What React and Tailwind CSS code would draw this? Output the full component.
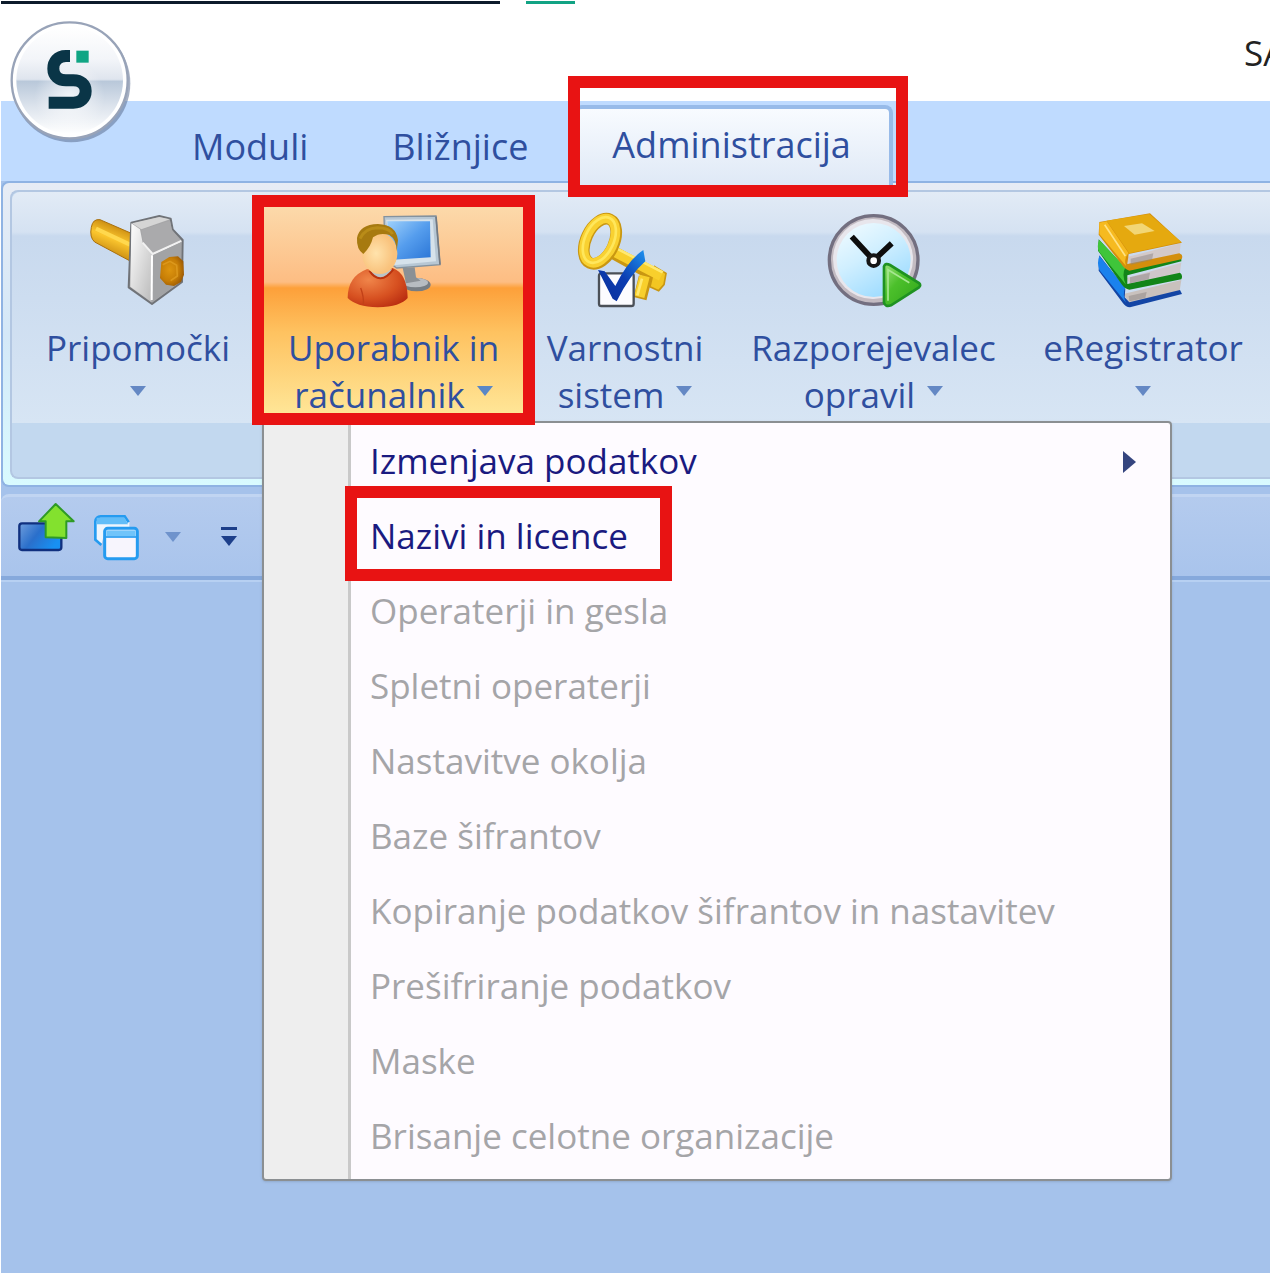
import React, { useState } from "react";

const menuItems = [
  { label: "Izmenjava podatkov", enabled: true, submenu: true },
  { label: "Nazivi in licence", enabled: true, marked: true },
  { label: "Operaterji in gesla" },
  { label: "Spletni operaterji" },
  { label: "Nastavitve okolja" },
  { label: "Baze šifrantov" },
  { label: "Kopiranje podatkov šifrantov in nastavitev" },
  { label: "Prešifriranje podatkov" },
  { label: "Maske" },
  { label: "Brisanje celotne organizacije" },
];

const tabs = ["Moduli", "Bližnjice", "Administracija"];

function Logo() {
  return (
    <svg viewBox="24 60 372 372" className="size-[124px]" aria-hidden="true">
      <defs>
        <linearGradient id="orbTop" x1="0" y1="0" x2="0" y2="1">
          <stop offset="0" stopColor="#ffffff" />
          <stop offset="0.3" stopColor="#f3f5f9" />
          <stop offset="0.49" stopColor="#dfe5ee" />
          <stop offset="0.51" stopColor="#b9c8da" />
          <stop offset="0.75" stopColor="#dde4ed" />
          <stop offset="1" stopColor="#ffffff" />
        </linearGradient>
        <radialGradient id="orbGlow">
          <stop offset="0" stopColor="#ffffff" stopOpacity="0.75" />
          <stop offset="1" stopColor="#ffffff" stopOpacity="0" />
        </radialGradient>
      </defs>
      <circle cx="214" cy="250" r="177" fill="#5c6f92" opacity="0.55" />
      <circle cx="209" cy="241" r="174" fill="#ffffff" stroke="#98a3b8" strokeWidth="7" />
      <circle cx="209" cy="241" r="160" fill="url(#orbTop)" />
      <ellipse cx="209" cy="290" rx="105" ry="110" fill="url(#orbGlow)" />
      <path d="M210 168 h-12 c-26 0 -38 18 -38 38 c0 22 16 35 38 35 h22 c22 0 37 12 37 32 c0 21 -14 35 -37 35 h-74" fill="none" stroke="#0a3547" strokeWidth="36" />
      <rect x="229" y="152" width="37" height="36" fill="#10a584" />
    </svg>
  );
}

function HammerIcon() {
  return (
    <svg viewBox="272 96 288 288" className="size-24" aria-hidden="true">
      <defs>
        <linearGradient id="handle" x1="0.3" y1="0" x2="0" y2="0.8">
          <stop offset="0" stopColor="#c98a10" />
          <stop offset="0.4" stopColor="#fbc62e" />
          <stop offset="1" stopColor="#b87708" />
        </linearGradient>
        <linearGradient id="steel" x1="0" y1="0" x2="1" y2="1">
          <stop offset="0" stopColor="#ffffff" />
          <stop offset="1" stopColor="#b9b9b9" />
        </linearGradient>
        <radialGradient id="knob" cx="0.4" cy="0.45" r="0.65">
          <stop offset="0" stopColor="#dd950f" />
          <stop offset="0.6" stopColor="#c67d06" />
          <stop offset="1" stopColor="#965504" />
        </radialGradient>
      </defs>
      <path d="M276 142 Q280 116 302 119 L396 160 L398 246 L286 186 Q270 172 276 142Z" fill="url(#handle)" stroke="#a8700e" strokeWidth="3" />
      <path d="M290 146 L392 194" stroke="#ffd84e" strokeWidth="12" />
      <path d="M396 128 L480 108 L514 116 L520 148 L550 180 L548 306 L458 372 L388 322Z" fill="#a6a6a8" stroke="#707378" strokeWidth="6" strokeLinejoin="round" />
      <path d="M396 130 L422 148 L430 188 L460 226 L456 366 L393 320Z" fill="url(#steel)" />
      <path d="M398 130 L480 111 L512 118 L426 148Z" fill="#d5d5d5" />
      <path d="M426 150 L512 122 L518 150 L544 182 L460 222 L432 186Z" fill="#aaaaac" />
      <path d="M430 188 L460 222 L546 183" fill="none" stroke="#f2f2f2" strokeWidth="6" />
      <path d="M462 226 L546 186 L545 304 L460 364Z" fill="#a2a3a5" />
      <path d="M458 226 L457 360" stroke="#ffffff" strokeWidth="6" />
      <path d="M486 246 L510 231 L536 229 L552 244 L554 284 L545 306 L524 318 L500 314 L482 294Z" fill="url(#knob)" />
      <path d="M490 254 L512 244 L532 256 L534 288 L514 302" fill="none" stroke="#e3a024" strokeWidth="5" opacity="0.7" />
    </svg>
  );
}

function UserComputerIcon() {
  return (
    <svg viewBox="310 66 288 288" className="size-24" aria-hidden="true">
      <defs>
        <linearGradient id="screen" x1="0" y1="0" x2="1" y2="1">
          <stop offset="0" stopColor="#9ed0fb" />
          <stop offset="0.5" stopColor="#559ded" />
          <stop offset="1" stopColor="#2a75d6" />
        </linearGradient>
        <radialGradient id="face" cx="0.4" cy="0.5">
          <stop offset="0" stopColor="#ffe3ac" />
          <stop offset="1" stopColor="#f9c27c" />
        </radialGradient>
        <radialGradient id="shirt" cx="0.35" cy="0.3" r="0.8">
          <stop offset="0" stopColor="#f0854a" />
          <stop offset="0.6" stopColor="#d75121" />
          <stop offset="1" stopColor="#b92c10" />
        </radialGradient>
      </defs>
      <ellipse cx="522" cy="284" rx="42" ry="20" fill="#777d83" />
      <ellipse cx="518" cy="278" rx="38" ry="14" fill="#b7bcc1" />
      <path d="M480 234 L516 232 L520 262 L534 272 L490 280Z" fill="#8b9095" />
      <path d="M424 80 L580 78 L592 224 L462 234 L428 210Z" fill="#b7c7d4" stroke="#84929e" strokeWidth="4" />
      <path d="M430 89 L570 88 L580 214 L452 226Z" fill="#d6e2eb" />
      <path d="M434 94 L562 94 L564 202 L440 210Z" fill="url(#screen)" />
      <path d="M580 80 L592 224" stroke="#737a83" strokeWidth="5" />
      <path d="M315 324 Q315 260 372 238 L450 234 Q494 250 495 324 Q474 350 405 352 Q340 350 315 324Z" fill="url(#shirt)" />
      <path d="M380 242 Q412 290 452 238" fill="#b9c3c6" stroke="#b9320e" strokeWidth="6" />
      <ellipse cx="411" cy="190" rx="53" ry="62" fill="url(#face)" />
      <path d="M362 192 Q341 178 343 144 Q350 104 406 102 Q460 104 466 150 L462 184 Q462 148 440 135 Q412 126 391 142 Q384 172 362 192Z" fill="#a77a10" />
      <path d="M352 146 Q366 114 404 113 Q440 113 450 132" fill="none" stroke="#b98c18" strokeWidth="9" />
      <path d="M354 294 Q364 320 362 344" fill="none" stroke="#c24118" strokeWidth="4" />
    </svg>
  );
}

function KeyIcon() {
  return (
    <svg viewBox="111 66 288 288" className="size-24" aria-hidden="true">
      <defs>
        <linearGradient id="tick" x1="0" y1="1" x2="1" y2="0">
          <stop offset="0" stopColor="#0b2f9a" />
          <stop offset="0.5" stopColor="#0b3db2" />
          <stop offset="1" stopColor="#1f93ef" />
        </linearGradient>
      </defs>
      <path d="M206 180 L362 266 M316 262 L300 326" fill="none" stroke="#c99712" strokeWidth="40" />
      <path d="M344 230 L378 250 L372 284 L356 302 L330 290Z" fill="#f3c622" stroke="#c99712" strokeWidth="5" />
      <path d="M206 176 L364 258 M314 258 L298 320" fill="none" stroke="#f8cf2c" strokeWidth="31" />
      <path d="M212 166 L368 247 M306 266 L292 316" fill="none" stroke="#ffe970" strokeWidth="8" />
      <ellipse cx="180" cy="154" rx="42" ry="72" transform="rotate(25 180 154)" fill="none" stroke="#c99712" strokeWidth="35" />
      <ellipse cx="179" cy="152" rx="41" ry="71" transform="rotate(25 179 152)" fill="none" stroke="#f9d131" strokeWidth="28" />
      <ellipse cx="178" cy="150" rx="43" ry="73" transform="rotate(25 178 150)" fill="none" stroke="#ffe75c" strokeWidth="8" />
      <rect x="177" y="250" width="104" height="98" rx="7" fill="#fcfcff" stroke="#4b5057" strokeWidth="7" />
      <path d="M174 240 L194 244 L226 288 Q264 210 310 180 L316 214 Q270 254 230 334 L218 326Z" fill="url(#tick)" />
    </svg>
  );
}

function ClockIcon() {
  return (
    <svg viewBox="255 66 288 288" className="size-24" aria-hidden="true">
      <defs>
        <linearGradient id="dial" x1="0" y1="0" x2="0.6" y2="1">
          <stop offset="0" stopColor="#f4fcff" />
          <stop offset="0.5" stopColor="#d0efff" />
          <stop offset="1" stopColor="#9fdcff" />
        </linearGradient>
        <linearGradient id="play" x1="0" y1="0" x2="1" y2="1">
          <stop offset="0" stopColor="#9ae27a" />
          <stop offset="0.4" stopColor="#4cc02b" />
          <stop offset="1" stopColor="#2fa51a" />
        </linearGradient>
      </defs>
      <circle cx="398" cy="210" r="133" fill="#c3bbc2" stroke="#736f80" strokeWidth="10" />
      <circle cx="396" cy="207" r="120" fill="#e8e6ec" />
      <circle cx="398" cy="210" r="111" fill="url(#dial)" />
      <path d="M338 146 L398 211 L446 166" fill="none" stroke="#0d0d0d" strokeWidth="17" strokeLinecap="square" />
      <circle cx="398" cy="212" r="16" fill="#ffffff" stroke="#161616" strokeWidth="12" />
      <path d="M429 229 Q433 218 447 225 L534 279 Q541 286 534 292 L450 346 Q433 352 429 338Z" fill="url(#play)" stroke="#1f9222" strokeWidth="8" />
      <path d="M441 332 L441 239 L505 278" fill="none" stroke="#a6e791" strokeWidth="5" />
    </svg>
  );
}

function BooksIcon() {
  return (
    <svg viewBox="255 96 288 288" className="size-24" aria-hidden="true">
      <path d="M340 342 L514 300 L508 338 L360 372Z" fill="#c9c1bd" />
      <path d="M268 226 L346 326 L344 352 L358 367 L510 330 L516 342 L360 382 Q346 380 338 368 L266 272Z" fill="#1345a5" />
      <path d="M268 228 L346 322 Q336 344 348 368 L268 270 Q260 248 268 228Z" fill="#1b82ed" />
      <path d="M350 294 L514 248 L508 288 L360 314Z" fill="#cfc7ca" />
      <path d="M266 178 L346 264 L514 224 L514 244 L352 286 L352 312 L510 278 Q520 286 514 298 L358 329 Q344 326 336 314 L264 212Z" fill="#128518" />
      <path d="M268 180 L346 262 Q334 286 348 314 L266 214 Q260 196 268 180Z" fill="#3fc53a" />
      <path d="M348 232 L512 190 L508 228 L360 258Z" fill="#d3c9c8" />
      <path d="M268 126 L420 100 L516 188 L356 222 L352 252 L508 220 Q522 226 514 238 L358 272 Q342 266 334 252 L266 164Z" fill="#d48e0c" />
      <path d="M290 122 L418 102 L514 186 L358 220Z" fill="#e5a90f" />
      <path d="M268 128 L290 124 L356 220 Q340 234 348 258 L268 162Z" fill="#f6ba20" />
      <path d="M284 134 L346 228" stroke="#ffe285" strokeWidth="5" />
      <path d="M342 138 L396 130 L434 153 L374 164Z" fill="#f2d675" />
      <path d="M362 236 L430 220 L426 240 L362 254Z M360 292 L420 278 L416 298 L360 310Z M356 348 L410 336 L406 354 L358 364Z" fill="#8d8684" opacity="0.5" />
    </svg>
  );
}

function ExportIcon() {
  return (
    <svg viewBox="54 96 180 150" className="h-[50px] w-[60px]" aria-hidden="true">
      <defs>
        <linearGradient id="box" x1="0" y1="0" x2="1" y2="0.5">
          <stop offset="0" stopColor="#6f9ddc" />
          <stop offset="0.5" stopColor="#2a6fcb" />
          <stop offset="1" stopColor="#1890f2" />
        </linearGradient>
      </defs>
      <rect x="61" y="160" width="126" height="80" rx="8" fill="url(#box)" stroke="#10307f" strokeWidth="7" />
      <path d="M140 202 V154 H120 L170 102 L224 154 H202 V204Z" fill="#83e12e" stroke="#2e9a26" strokeWidth="6" strokeLinejoin="round" />
    </svg>
  );
}

function WindowsIcon() {
  return (
    <svg viewBox="279 132 144 144" className="size-12" aria-hidden="true">
      <path d="M286 158 Q288 142 302 142 L376 142 L388 160 L388 180 L316 180 L304 228 L286 212Z" fill="#eef5fd" />
      <path d="M304 228 L286 212 L286 158 Q288 142 302 142 L374 142 L386 160" fill="none" stroke="#259bf0" strokeWidth="8" />
      <path d="M290 146 H374 L384 166 H290Z" fill="#62bdf8" />
      <rect x="314" y="178" width="98" height="91" rx="9" fill="#f7f5fd" stroke="#259bf0" strokeWidth="9" />
      <rect x="319" y="184" width="88" height="18" fill="#70c4fa" />
      <path d="M318 204 H408" stroke="#259bf0" strokeWidth="5" />
    </svg>
  );
}

function Arrow({ className }) {
  return (
    <svg viewBox="0 0 16 10" className={className} fill="currentColor" aria-hidden="true">
      <path d="M0 0 H16 L8 10Z" />
    </svg>
  );
}

function RedFrame({ className }) {
  return <span className={"pointer-events-none absolute z-20 border-12 border-[#e81313] " + className} />;
}

function RibbonButton({ icon, lines, className, active, onClick }) {
  return (
    <button
      type="button"
      onClick={onClick}
      className={"flex h-full shrink-0 flex-col items-center pt-5 text-[35px] leading-[47px] " + className}
    >
      {icon}
      <span className="mt-4 block">{lines[0]}</span>
      <span className="flex h-[47px] items-center justify-center gap-3">
        {lines[1]}
        <Arrow className={"-mt-2 h-[10px] w-4 " + (active ? "text-[#5a87c6]" : "text-[#6488c4]")} />
      </span>
    </button>
  );
}

function DropdownMenu() {
  return (
    <ul className="absolute top-full -left-0.5 z-10 w-[910px] rounded-sm border-2 border-[#8b8f92] bg-[linear-gradient(90deg,#eeeeee_84px,#c9c9c9_84px,#c9c9c9_87px,#fefbff_87px)] pt-px pb-[5px] text-[35px] shadow-sm">
      {menuItems.map((item) => (
        <li key={item.label} className="relative">
          <button
            type="button"
            disabled={!item.enabled}
            className={
              "flex h-[75px] w-full items-center justify-between pr-[34px] pl-[106px] text-left whitespace-nowrap " +
              (item.enabled ? "text-[#1a1a80]" : "text-[#a5a5a8]")
            }
          >
            {item.label}
            {item.submenu && (
              <svg viewBox="0 0 13 22" className="h-[22px] w-[13px]" fill="#35457f" aria-hidden="true">
                <path d="M0 0 L13 11 L0 22Z" />
              </svg>
            )}
          </button>
          {item.marked && <RedFrame className="-top-[13px] left-[81px] h-[95px] w-[327px]" />}
        </li>
      ))}
    </ul>
  );
}

function App() {
  const [activeTab, setActiveTab] = useState("Administracija");
  const [menuOpen, setMenuOpen] = useState(true);

  return (
    <div className="flex min-h-screen flex-col overflow-hidden border-x border-b border-white bg-[#a5c2eb] font-['Open_Sans','Noto_Sans',sans-serif] text-[36px] text-[#2f4f9f]">
      {/* title bar */}
      <header className="relative flex h-[101px] flex-col bg-white pt-px">
        <div className="flex h-[3px] gap-[26px]">
          <div className="w-[499px] bg-[#0d1b2b]" />
          <div className="w-[49px] bg-[#12a384]" />
        </div>
        <h1 className="mt-[25px] ml-auto w-[26px] overflow-hidden text-[35px] leading-[48px] text-[#222222]">SA</h1>
        <button type="button" aria-label="Meni" className="absolute top-5 left-[7px] z-10 rounded-full">
          <Logo />
        </button>
      </header>

      {/* tabs */}
      <nav className="flex h-20 items-end gap-2 bg-[#bfdbff] pl-[153px]">
        {tabs.map((tab) => (
          <button
            key={tab}
            type="button"
            onClick={() => setActiveTab(tab)}
            className={
              "relative px-[38px] " +
              (activeTab === tab
                ? "z-10 -mb-1 h-20 rounded-t-lg border-t-4 border-r-4 border-[#98bbe9] bg-linear-to-b from-[#f8fbff] to-[#dfe9f6] pb-1"
                : "h-[68px]")
            }
          >
            {tab}
            {tab === "Administracija" && <RedFrame className="-top-[33px] -right-[19px] -bottom-3 -left-1.5" />}
          </button>
        ))}
      </nav>

      {/* ribbon */}
      <section className="rounded-l-lg border-y-2 border-l-2 border-[#8fb3e3] bg-linear-to-b from-[#e7ecf5] via-[#d4e8f8] to-[#d9fbff] pt-[7px] pb-[6px] pl-[7px]">
        <div className="rounded-l-lg border-y-2 border-l-2 border-[#b3c7e2] bg-[#c2d8ef]">
          <div className="flex h-[231px] rounded-tl-lg bg-[linear-gradient(180deg,#e2ebf6_0px,#d5e2f2_40px,#c8d9ee_44px,#d7e5f4_231px)]">
            <RibbonButton icon={<HammerIcon />} lines={["Pripomočki"]} className="w-[252px]" />
            <div className="relative h-[229px] w-[259px] shrink-0">
              <RibbonButton
                icon={<UserComputerIcon />}
                lines={["Uporabnik in", "računalnik"]}
                onClick={() => setMenuOpen(!menuOpen)}
                active
                className="w-full bg-[linear-gradient(180deg,transparent_8px,#fcdcae_8px,#fdbd83_90px,#fda03a_96px,#fec260_140px,#ffe99c_229px)]"
              />
              <RedFrame className="top-[3px] -right-3 -bottom-1 -left-3" />
              {menuOpen && <DropdownMenu />}
            </div>
            <RibbonButton icon={<KeyIcon />} lines={["Varnostni", "sistem"]} className="w-[204px]" />
            <RibbonButton icon={<ClockIcon />} lines={["Razporejevalec", "opravil"]} className="w-[293px]" />
            <RibbonButton icon={<BooksIcon />} lines={["eRegistrator"]} className="w-[246px]" />
          </div>
          <div className="h-[54px]" />
        </div>
      </section>

      {/* quick access */}
      <div className="mt-[7px] flex h-[86px] items-center rounded-tl-lg border-t-3 border-b-4 border-[#c1d5f2] border-b-[#86a9dc] bg-linear-to-b from-[#b4cbee] to-[#a9c4ec] pl-4">
        <button type="button" aria-label="Izvoz" className="-mt-5">
          <ExportIcon />
        </button>
        <button type="button" aria-label="Okna" className="ml-4">
          <WindowsIcon />
        </button>
        <button type="button" aria-label="Seznam oken" className="ml-6 text-[#6f93cc]">
          <Arrow className="h-[10px] w-4" />
        </button>
        <button type="button" aria-label="Prilagodi" className="ml-10 flex flex-col gap-1.5 text-[#1d3f8a]">
          <span className="h-[3px] w-4 bg-current" />
          <Arrow className="h-[10px] w-4" />
        </button>
      </div>
      <main className="grow border-t-2 border-[#b7d0f2]" />
    </div>
  );
}

export default App;
